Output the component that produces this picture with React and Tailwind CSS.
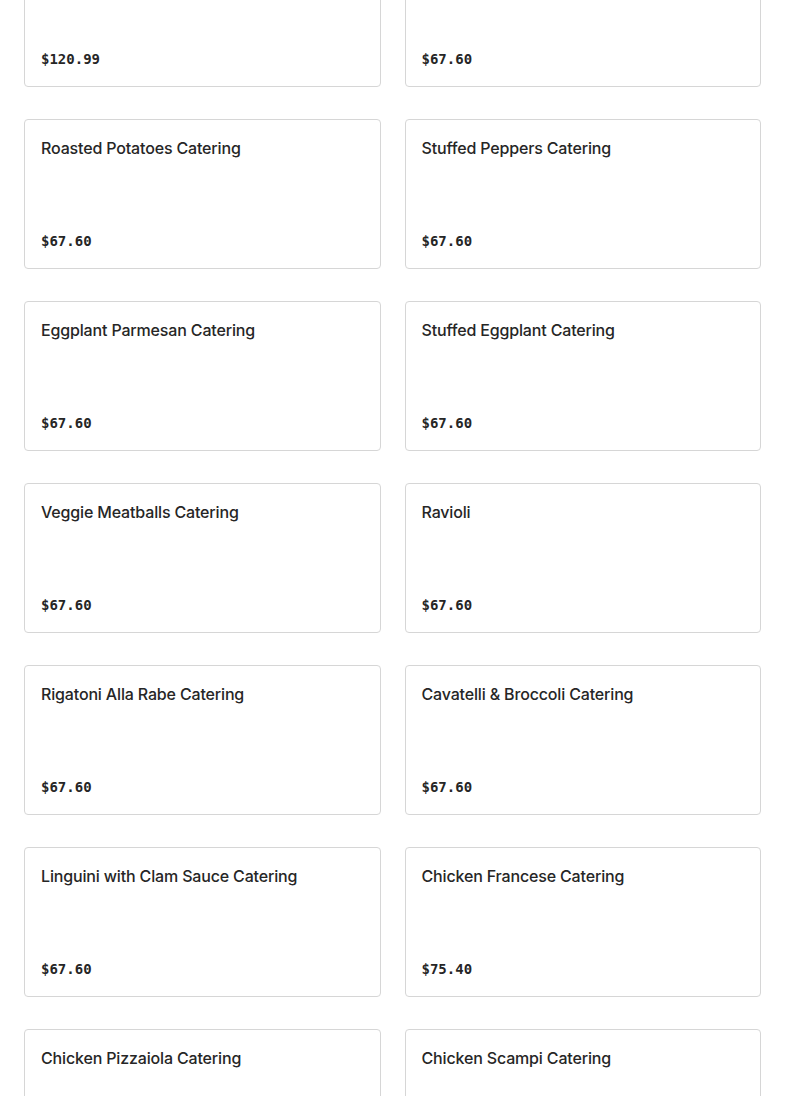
const items = [
  { name: 'Catering Tray', price: '$120.99' },
  { name: 'Catering Tray', price: '$67.60' },
  { name: 'Roasted Potatoes Catering', price: '$67.60' },
  { name: 'Stuffed Peppers Catering', price: '$67.60' },
  { name: 'Eggplant Parmesan Catering', price: '$67.60' },
  { name: 'Stuffed Eggplant Catering', price: '$67.60' },
  { name: 'Veggie Meatballs Catering', price: '$67.60' },
  { name: 'Ravioli', price: '$67.60' },
  { name: 'Rigatoni Alla Rabe Catering', price: '$67.60' },
  { name: 'Cavatelli & Broccoli Catering', price: '$67.60' },
  { name: 'Linguini with Clam Sauce Catering', price: '$67.60' },
  { name: 'Chicken Francese Catering', price: '$75.40' },
  { name: 'Chicken Pizzaiola Catering', price: '$67.60' },
  { name: 'Chicken Scampi Catering', price: '$67.60' },
];

const App = () => {
  return (
    <div className="h-[1096px] overflow-hidden bg-white px-6">
      <div className="-mt-[63px] grid grid-cols-2 gap-x-6 gap-y-8">
        {items.map((item, i) => (
          <div
            key={i}
            className="flex h-[150px] flex-col justify-between rounded border border-[#d6d6d6] bg-white p-4"
          >
            <h3 className="font-['Inter',sans-serif] text-base font-medium leading-6 tracking-[-0.01em] text-[#262626]">
              {item.name}
            </h3>
            <span className="font-['DejaVu_Sans_Mono',monospace] text-sm font-bold leading-[22px] text-[#262626]">
              {item.price}
            </span>
          </div>
        ))}
      </div>
    </div>
  );
};

export default App;
